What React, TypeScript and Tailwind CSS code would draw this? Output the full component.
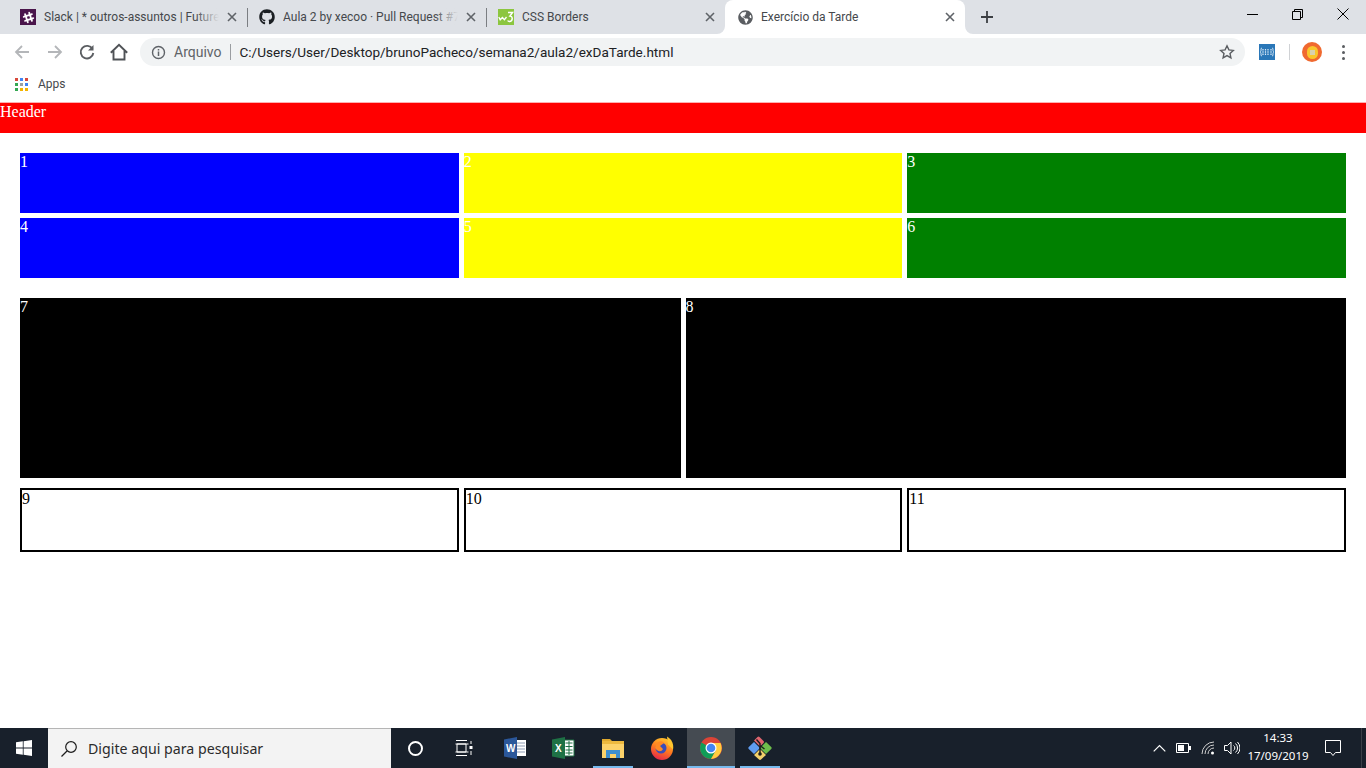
import React from "react";
import { FaGithub, FaSlackHash, FaGlobeAmericas } from "react-icons/fa";

const ui = "font-['Roboto','Noto_Sans',sans-serif]";

function CloseX({ color = "#5f6368" }: { color?: string }) {
  return (
    <svg width="10" height="10" viewBox="0 0 10 10" className="shrink-0">
      <path d="M1 1l8 8M9 1l-8 8" stroke={color} strokeWidth="1.6" />
    </svg>
  );
}

function Tab({ icon, title, active, fade, sep }: { icon: React.ReactNode; title: string; active?: boolean; fade?: boolean; sep?: boolean }) {
  return (
    <div className={`relative flex items-center h-[34px] pl-3 pr-[10px] ${active ? "w-[240px] bg-white rounded-t-lg" : "w-[239px]"}`}>
      <div className="w-4 h-4 shrink-0 flex items-center justify-center">{icon}</div>
      <div className="relative ml-2 flex-1 overflow-hidden whitespace-nowrap text-[12px] text-[#45484c]">
        {title}
        {fade && <div className="absolute right-0 top-0 bottom-0 w-6 bg-gradient-to-r from-transparent to-[#dee1e6]" />}
      </div>
      <div className="ml-2 w-[10px] flex justify-center"><CloseX /></div>
      {sep && <div className="absolute right-[-1px] top-[8px] h-[19px] w-px bg-[#7b7e82]" />}
      {active && (
        <>
          <svg width="8" height="8" viewBox="0 0 8 8" className="absolute left-[-8px] bottom-0"><path d="M8 0v8H0a8 8 0 0 0 8-8z" fill="#fff" /></svg>
          <svg width="8" height="8" viewBox="0 0 8 8" className="absolute right-[-8px] bottom-0"><path d="M0 0v8h8a8 8 0 0 1-8-8z" fill="#fff" /></svg>
        </>
      )}
    </div>
  );
}

function W3() {
  return (
    <div className="w-4 h-4 bg-[#8cc63f] flex items-center justify-center">
      <svg width="16" height="16" viewBox="0 0 16 16">
        <path d="M.8 8l1.400 2.800L4.400 8.500l2 2.300L8.500 8" stroke="#fff" strokeWidth="1.300" fill="none" />
        <path d="M10 3.500h4.500l-2.500 3.500c3 0 3 5.500-.5 5.500-1 0-1.500-.4-1.800-1" stroke="#fff" strokeWidth="1.500" fill="none" />
      </svg>
    </div>
  );
}

function AppsGrid() {
  const c = ["#d8483b", "#4285f4", "#d8483b", "#34a853", "#9aa0a6", "#4285f4", "#34a853", "#f4b400", "#f4b400"];
  return (
    <div className="grid grid-cols-3 gap-[2px] w-[13px]">
      {c.map((x, i) => <div key={i} className="w-[3px] h-[3px]" style={{ background: x }} />)}
    </div>
  );
}

function CssBadge() {
  return (
    <svg width="16" height="16" viewBox="0 0 16 16">
      <rect width="16" height="16" fill="#2a77b8" />
      <path d="M3 4c-1.200 0-1 1.500-1 2.500S1 8 1 8s1 .5 1 1.500S1.800 12 3 12M13 4c1.200 0 1 1.500 1 2.500S15 8 15 8s-1 .5-1 1.500.2 2.500-1 2.500" stroke="#dcebf7" strokeWidth="1" fill="none" />
      <path d="M4 5v6M6.500 5v6M9 5v6M12 5v6" stroke="#dcebf7" strokeWidth="1.200" strokeDasharray="1.500 .8" />
    </svg>
  );
}

function Toolbar() {
  return (
    <div className="flex items-center h-9 bg-white">
      <div className="w-10 flex justify-center pl-1">
        <svg width="18" height="18" viewBox="0 0 18 18"><path d="M16 9H3M9 3L3 9l6 6" stroke="#b4b6b9" strokeWidth="1.800" fill="none" /></svg>
      </div>
      <div className="w-[30px] flex justify-center">
        <svg width="18" height="18" viewBox="0 0 18 18"><path d="M2 9h13M9 3l6 6-6 6" stroke="#b4b6b9" strokeWidth="1.800" fill="none" /></svg>
      </div>
      <div className="w-[33px] flex justify-center">
        <svg width="18" height="18" viewBox="0 0 18 18"><path d="M14.500 6A6.300 6.300 0 1 0 15.300 10" stroke="#5a5d61" strokeWidth="1.900" fill="none" /><path d="M15.500 2v5.500H10z" fill="#5a5d61" /></svg>
      </div>
      <div className="w-[31px] flex justify-center">
        <svg width="18" height="18" viewBox="0 0 18 18"><path d="M.8 9.800L9 1.800l8.200 8M3.500 8v8.500h11V8" stroke="#4f5256" strokeWidth="1.900" fill="none" /></svg>
      </div>
      <div className="ml-[6px] w-[1105px] h-7 rounded-full bg-[#f1f3f4] flex items-center pl-[11px] pr-[10px]">
        <svg width="15" height="15" viewBox="0 0 15 15" className="shrink-0"><circle cx="7.500" cy="7.500" r="6" stroke="#5f6368" strokeWidth="1.400" fill="none" /><path d="M7.500 6.500v4.500M7.500 4v1.500" stroke="#5f6368" strokeWidth="1.500" /></svg>
        <span className="ml-[8px] text-[14px] text-[#5f6368]">Arquivo</span>
        <div className="ml-[8px] w-px h-[16px] bg-[#9a9da1]" />
        <span className="ml-[9px] flex-1 text-[13.560px] text-[#202124]">C:/Users/User/Desktop/brunoPacheco/semana2/aula2/exDaTarde.html</span>
        <svg width="16" height="16" viewBox="0 0 16 16" className="shrink-0"><path d="M8 1.800l1.900 4.100 4.400.5-3.300 3 .9 4.400L8 11.600l-3.900 2.200.9-4.400-3.300-3 4.400-.5z" stroke="#5a5d61" strokeWidth="1.400" fill="none" /></svg>
      </div>
      <div className="ml-[14px]"><CssBadge /></div>
      <div className="ml-[14px] w-px h-4 bg-[#d0d2d5]" />
      <div className="ml-[12px] w-5 h-5 rounded-full bg-[#f0692f] flex items-center justify-center">
        <div className="w-[11px] h-[13px] rounded-full bg-[#f9c62d] flex items-center justify-center"><div className="w-[5px] h-[5px] bg-[#d8d2b0]" /></div>
      </div>
      <div className="ml-[20px] flex flex-col gap-[3px]">
        <div className="w-[3px] h-[3px] rounded-full bg-[#5a5d61]" />
        <div className="w-[3px] h-[3px] rounded-full bg-[#5a5d61]" />
        <div className="w-[3px] h-[3px] rounded-full bg-[#5a5d61]" />
      </div>
    </div>
  );
}

function Browser() {
  return (
    <div className={`${ui} shrink-0`}>
      <div className="flex h-[34px] bg-[#dee1e6] pl-2 relative">
        <Tab icon={<div className="w-4 h-4 bg-[#4a154b] flex items-center justify-center"><FaSlackHash size={13} color="#fff" /></div>} title="Slack | * outros-assuntos | Future4" fade sep />
        <Tab icon={<FaGithub size={16} color="#1b1f23" />} title="Aula 2 by xecoo · Pull Request #7" fade sep />
        <Tab icon={<W3 />} title="CSS Borders" />
        <Tab icon={<FaGlobeAmericas size={15} color="#5a5d61" />} title="Exercício da Tarde" active />
        <div className="w-11 flex items-center justify-center">
          <svg width="12" height="12" viewBox="0 0 12 12"><path d="M6 0v12M0 6h12" stroke="#3c3f43" strokeWidth="1.800" /></svg>
        </div>
        <div className="flex-1" />
        <div className="flex items-start pt-[8px]">
          <div className="w-[45px] h-[12px] flex justify-center items-center"><div className="w-[11px] h-px bg-black" /></div>
          <div className="w-[45px] h-[12px] flex justify-center items-center">
            <svg width="11" height="11" viewBox="0 0 11 11"><path d="M.5 2.500h8v8h-8zM2.500 2.500v-2h8v8h-2" stroke="#000" fill="none" /></svg>
          </div>
          <div className="w-[46px] h-[12px] flex justify-center items-center">
            <svg width="12" height="12" viewBox="0 0 12 12"><path d="M.5.500l11 11M11.500.500l-11 11" stroke="#000" /></svg>
          </div>
        </div>
      </div>
      <Toolbar />
      <div className="flex items-center h-[32px] pb-[4px] pl-[15px] bg-white">
        <AppsGrid />
        <span className="ml-[10px] text-[12px] text-[#45484c]">Apps</span>
      </div>
      <div className="h-px bg-[#ffb0b0]" />
    </div>
  );
}

function Cell({ n, bg, text, h }: { n: number; bg: string; text: string; h: string }) {
  return <div className={`${bg} ${text} ${h}`}>{n}</div>;
}

function Page() {
  return (
    <div className="flex-1 bg-white font-['Liberation_Serif',serif] text-[16px] leading-[18px]">
      <div className="h-[30px] bg-[#ff0000] text-white">Header</div>
      <div className="p-5 pb-0">
        <div className="grid grid-cols-3 gap-[5px]">
          <Cell n={1} bg="bg-[#0000ff]" text="text-white" h="h-[60px]" />
          <Cell n={2} bg="bg-[#ffff00]" text="text-white" h="h-[60px]" />
          <Cell n={3} bg="bg-[#008000]" text="text-white" h="h-[60px]" />
          <Cell n={4} bg="bg-[#0000ff]" text="text-white" h="h-[60px]" />
          <Cell n={5} bg="bg-[#ffff00]" text="text-white" h="h-[60px]" />
          <Cell n={6} bg="bg-[#008000]" text="text-white" h="h-[60px]" />
        </div>
        <div className="mt-5 grid grid-cols-2 gap-[5px]">
          <Cell n={7} bg="bg-black" text="text-white" h="h-[180px]" />
          <Cell n={8} bg="bg-black" text="text-white" h="h-[180px]" />
        </div>
        <div className="mt-[10px] grid grid-cols-3 gap-[5px]">
          {[9, 10, 11].map((n) => (
            <div key={n} className="h-[64px] border-2 border-black text-black">{n}</div>
          ))}
        </div>
      </div>
    </div>
  );
}

function TaskIcon({ w = "w-12", children, active, line }: { w?: string; children: React.ReactNode; active?: boolean; line?: boolean }) {
  return (
    <div className={`relative h-10 ${w} flex items-center justify-center ${active ? "bg-[#454b52]" : ""}`}>
      {children}
      {line && <div className="absolute left-0 right-0 bottom-0 h-[2px] bg-[#76b9ed]" />}
    </div>
  );
}

function Word() {
  return (
    <svg width="24" height="24" viewBox="0 0 24 24">
      <path d="M12 4h11v16H12z" fill="#fff" />
      <path d="M14 7h8M14 10h8M14 13h8M14 16h8" stroke="#8d9bb3" />
      <path d="M1 3.500L14 1v22L1 20.500z" fill="#2b579a" />
      <text x="3" y="16" fontSize="10" fontWeight="700" fill="#fff" fontFamily="Liberation Sans">W</text>
    </svg>
  );
}

function Excel() {
  return (
    <svg width="24" height="24" viewBox="0 0 24 24">
      <path d="M12 4h11v16H12z" fill="#fff" stroke="#1e7145" />
      <path d="M14.500 7h7M14.500 10.500h7M14.500 14h7M14.500 17h7M18 5v14" stroke="#1e7145" />
      <path d="M1 3.500L14 1v22L1 20.500z" fill="#1e7145" />
      <text x="4" y="16" fontSize="10" fontWeight="700" fill="#fff" fontFamily="Liberation Sans">X</text>
    </svg>
  );
}

function Explorer() {
  return (
    <svg width="24" height="22" viewBox="0 0 24 22">
      <path d="M1 2h8l2 2H1z" fill="#e0a92e" />
      <path d="M1 4h22v17H1z" fill="#fcd26a" />
      <path d="M1 4h22v3H1z" fill="#edb93f" />
      <path d="M5 21v-8h14v8h-4v-4H9v4z" fill="#3e8fd0" />
    </svg>
  );
}

function Firefox() {
  return (
    <svg width="24" height="24" viewBox="0 0 24 24">
      <defs>
        <linearGradient id="ff" x1="0.700" y1="0" x2="0.300" y2="1"><stop offset="0" stopColor="#ffc52e" /><stop offset=".5" stopColor="#ff7a1f" /><stop offset="1" stopColor="#e3254b" /></linearGradient>
      </defs>
      <circle cx="12" cy="13" r="11" fill="url(#ff)" />
      <path d="M17 .5c5 3 7 8 6 13l-5-5z" fill="#ffc52e" />
      <circle cx="11" cy="12" r="5.500" fill="#3a4db8" />
      <path d="M6 8c3-4 7-3 8-1l-4 3 3 3c-2 4-6 2-8-1z" fill="#ff8a24" />
    </svg>
  );
}

function Chrome() {
  return (
    <svg width="24" height="24" viewBox="0 0 24 24">
      <circle cx="12" cy="12" r="11" fill="#db4437" />
      <path d="M12 12L2.500 6.500A11 11 0 0 0 12 23l5.500-9.500z" fill="#0f9d58" />
      <path d="M12 7h9.500A11 11 0 0 1 12 23l5-9z" fill="#ffcd40" />
      <circle cx="12" cy="12" r="5.500" fill="#fff" />
      <circle cx="12" cy="12" r="4.300" fill="#4285f4" />
    </svg>
  );
}

function GitIcon() {
  return (
    <svg width="24" height="24" viewBox="0 0 24 24">
      <path d="M6 4.500L9.500 1a1.400 1.400 0 0 1 2 0l4 4a1.400 1.400 0 0 1 0 2L12 10.500z" fill="#e0656f" />
      <path d="M.8 11L6 6l5 5a1.400 1.400 0 0 1 0 2l-5 5-5.200-5a1.400 1.400 0 0 1 0-2z" fill="#5f9cf0" />
      <path d="M13 11l5-5 5.200 5a1.400 1.400 0 0 1 0 2L18 18l-5-5a1.400 1.400 0 0 1 0-2z" fill="#6dbd4b" />
      <path d="M11 14a1.400 1.400 0 0 1 2 0l5 5-5 4.500a1.400 1.400 0 0 1-2 0L6 19z" fill="#f2d06b" />
      <path d="M8.500 3.500l3.500 4v10M12 9.500l4.500 3.500" stroke="#1c1c1c" strokeWidth="1.400" fill="none" />
      <circle cx="12" cy="18" r="1.800" fill="#1c1c1c" />
    </svg>
  );
}

function Taskbar() {
  return (
    <div className="shrink-0 h-10 bg-[#18202b] flex items-stretch font-['Noto_Sans',sans-serif]">
      <div className="w-12 flex items-center justify-center">
        <svg width="16" height="16" viewBox="0 0 16 16"><path d="M0 2.300L6.800 1.300V7.600H0zM7.600 1.200L16 0v7.600H7.600zM0 8.400h6.800v6.300L0 13.700zM7.600 8.400H16V16l-8.400-1.200z" fill="#fff" /></svg>
      </div>
      <div className="w-[343px] bg-[#f3f3f3] border-t border-[#b5b5b5] flex items-center pl-[12px]">
        <svg width="18" height="18" viewBox="0 0 18 18"><circle cx="11" cy="7" r="5.300" stroke="#1c1c1c" strokeWidth="1.200" fill="none" /><path d="M7 11l-5.500 5.500" stroke="#1c1c1c" strokeWidth="1.300" /></svg>
        <span className="ml-[10px] text-[14.200px] text-[#2b2b2b]">Digite aqui para pesquisar</span>
      </div>
      <TaskIcon w="w-[49px]">
        <div className="w-[15px] h-[15px] rounded-full border-2 border-white" />
      </TaskIcon>
      <TaskIcon>
        <svg width="18" height="16" viewBox="0 0 18 16"><path d="M1 .5h11M1 15.500h11M2 4h9v8H2zM.5 4h13M.5 12h13M16 1v3M16 11v4" stroke="#fff" fill="none" /><path d="M14.500 6h3v3h-3z" fill="#fff" /></svg>
      </TaskIcon>
      <TaskIcon w="w-[54px]"><Word /></TaskIcon>
      <TaskIcon w="w-[42px]"><Excel /></TaskIcon>
      <div className="w-[5px]" />
      <TaskIcon w="w-[40px] mx-[4px]" line><Explorer /></TaskIcon>
      <TaskIcon w="w-[50px]"><Firefox /></TaskIcon>
      <TaskIcon active line><Chrome /></TaskIcon>
      <div className="w-[5px]" />
      <TaskIcon w="w-[40px]" line><GitIcon /></TaskIcon>
      <div className="flex-1" />
      <div className="flex items-center text-white">
        <div className="w-[24px] flex justify-center">
          <svg width="13" height="8" viewBox="0 0 13 8"><path d="M.7 7.300L6.500 1.500l5.800 5.800" stroke="#fff" strokeWidth="1.200" fill="none" /></svg>
        </div>
        <div className="w-[24px] flex justify-center">
          <svg width="15" height="10" viewBox="0 0 15 10"><path d="M.5.500h12v9H.5z" stroke="#fff" fill="none" /><path d="M2 2h6v6H2z" fill="#fff" /><path d="M13 3h2v4h-2z" fill="#fff" /></svg>
        </div>
        <div className="w-[25px] flex justify-center">
          <svg width="14" height="14" viewBox="0 0 14 14"><path d="M1 13A12 12 0 0 1 13 1M4 13a9 9 0 0 1 9-9M7 13a6 6 0 0 1 6-6" stroke="#d0d0d0" fill="none" /><circle cx="11.500" cy="12" r="1.500" fill="#fff" /></svg>
        </div>
        <div className="w-[23px] flex justify-center">
          <svg width="16" height="14" viewBox="0 0 16 14"><path d="M.5 4.500h3l3.500-3.500v12l-3.500-3.500h-3z" stroke="#fff" fill="none" /><path d="M9.500 4.500a3 3 0 0 1 0 5M11.500 2.500a6 6 0 0 1 0 9M13.500 1a8.500 8.500 0 0 1 0 12" stroke="#fff" fill="none" /></svg>
        </div>
        <div className="w-[70px] flex flex-col items-center text-[11.500px] leading-[18px] pb-[2px]">
          <span>14:33</span>
          <span>17/09/2019</span>
        </div>
      </div>
      <div className="w-[40px] flex items-center justify-center">
        <svg width="18" height="17" viewBox="0 0 18 17"><path d="M.5.500h15v12h-5l-2.500 3-2.500-3h-5z" stroke="#fff" fill="none" transform="translate(1 0)" /></svg>
      </div>
      <div className="w-[8px]" />
      <div className="w-[5px] border-l border-[#3a4048]" />
    </div>
  );
}

export default function App() {
  return (
    <div className="h-screen w-full overflow-hidden flex flex-col bg-white">
      <Browser />
      <Page />
      <Taskbar />
    </div>
  );
}
